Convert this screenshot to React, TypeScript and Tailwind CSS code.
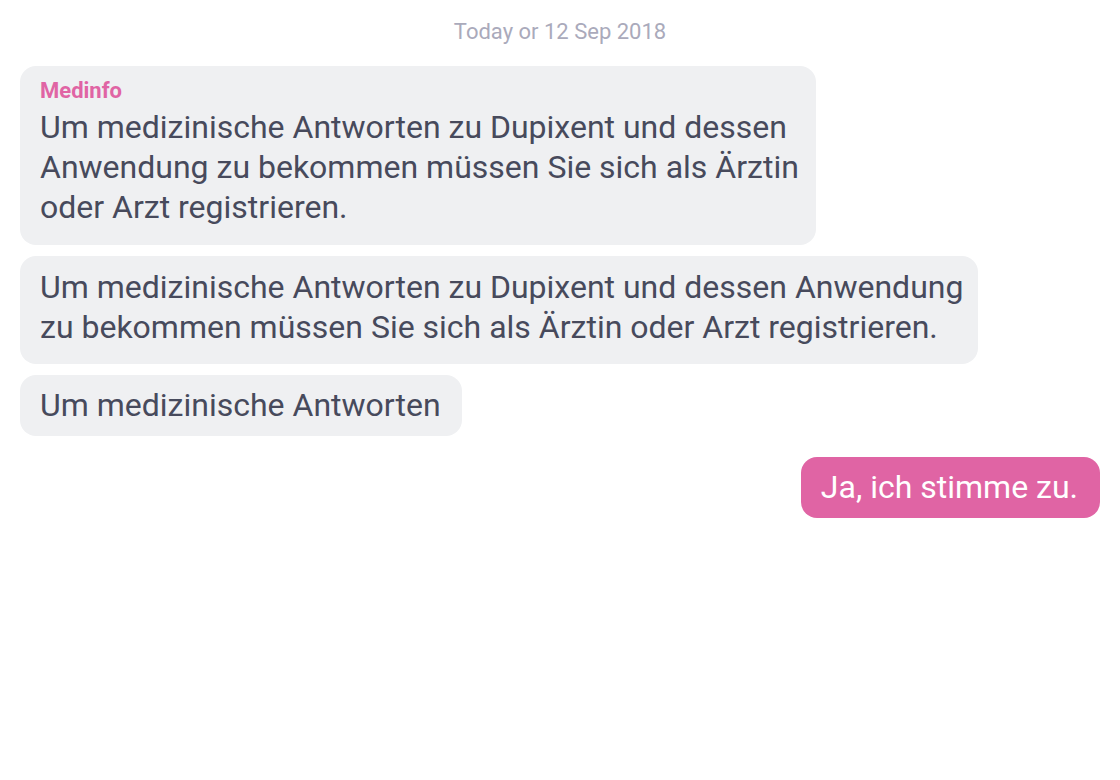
import React from 'react';

type Msg = {
  id: number;
  from: 'bot' | 'me';
  sender?: string;
  text: string;
  box: string;
};

const longText =
  'Um medizinische Antworten zu Dupixent und dessen Anwendung zu bekommen müssen Sie sich als Ärztin oder Arzt registrieren.';

// each bubble carries its own width / padding, the source app was not consistent
const messages: Msg[] = [
  { id: 1, from: 'bot', sender: 'Medinfo', text: longText, box: 'max-w-[796px] pt-[12px] pb-[18px] pr-[12px]' },
  { id: 2, from: 'bot', text: longText, box: 'max-w-[958px] pt-[11px] pb-[17px] pr-[12px]' },
  { id: 3, from: 'bot', text: 'Um medizinische Antworten', box: 'max-w-[958px] pt-[10px] pb-[11px] pr-[21px]' },
  { id: 4, from: 'me', text: 'Ja, ich stimme zu.', box: 'max-w-[958px] pt-[10px] pb-[11px] pr-[22px]' },
];

const App = () => {
  return (
    <div className="min-h-[780px] w-full bg-white px-5 pt-[19px] font-['Roboto',sans-serif]">
      <p className="text-center text-[22px] leading-[26px] text-[#aaaabb]">Today or 12 Sep 2018</p>

      <div className="mt-[21px] flex flex-col gap-[11px]">
        {messages.map((m) =>
          m.from === 'bot' ? (
            <div key={m.id} className="flex justify-start">
              <div className={`${m.box} rounded-[16px] bg-[#eff0f2] pl-5`}>
                {m.sender && (
                  <p className="mb-[3px] text-[22px] font-bold leading-[26px] text-[#e064a4]">{m.sender}</p>
                )}
                <p className="text-[32px] leading-[40px] text-[#474a5c]">{m.text}</p>
              </div>
            </div>
          ) : (
            <div key={m.id} className="mt-[10px] flex justify-end">
              <div className={`${m.box} rounded-[16px] bg-[#e064a4] pl-5`}>
                <p className="text-[32px] leading-[40px] text-white">{m.text}</p>
              </div>
            </div>
          )
        )}
      </div>
    </div>
  );
};

export default App;
